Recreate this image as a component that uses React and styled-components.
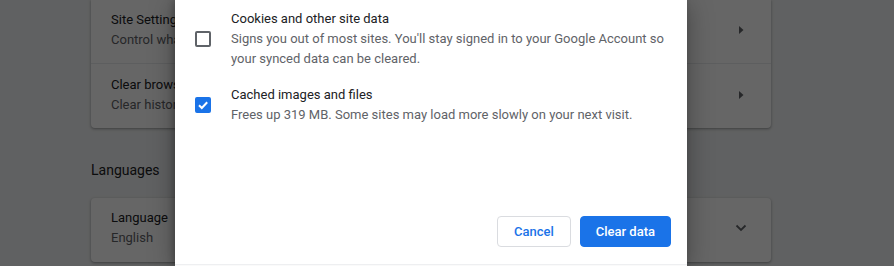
import React from "react";
import styled, { createGlobalStyle } from "styled-components";

const Global = createGlobalStyle`
  html, body { margin: 0; padding: 0; }
  body {
    width: 894px;
    height: 266px;
    overflow: hidden;
    background: #f1f3f4;
    font-family: Roboto, "Liberation Sans", Arial, sans-serif;
    font-size: 13px;
    -webkit-font-smoothing: antialiased;
  }
`;

const Page = styled.div`
  position: relative;
  width: 894px;
  height: 266px;
  box-sizing: border-box;
  padding-right: 32px;
  overflow: hidden;
  display: flex;
  justify-content: center;
`;

const Column = styled.main`
  width: 680px;
  display: flex;
  flex-direction: column;
`;

const Card = styled.section`
  background: #fff;
  border-radius: 4px;
  box-shadow: 0 1px 2px rgba(60, 64, 67, 0.3), 0 1px 3px 1px rgba(60, 64, 67, 0.15);
  border-top-left-radius: ${(p) => (p.$cut ? 0 : 4)}px;
  border-top-right-radius: ${(p) => (p.$cut ? 0 : 4)}px;
`;

const Row = styled.div`
  display: flex;
  align-items: center;
  padding: ${(p) => p.$pad || "12px 0 12px 20px"};
  border-top: ${(p) => (p.$sep ? "1px solid #e8eaed" : "none")};
`;

const RowText = styled.div`
  flex: 1;
  display: flex;
  flex-direction: column;
`;

const Title = styled.div`
  color: #202124;
  font-size: 13px;
  line-height: 20px;
`;

const Secondary = styled.div`
  color: #5f6368;
  font-size: 13px;
  line-height: 20px;
`;

const IconSlot = styled.div`
  width: 20px;
  height: 20px;
  margin-right: 20px;
  display: flex;
  align-items: center;
  justify-content: center;
  color: #5f6368;
`;

const Heading = styled.h2`
  margin: 32px 0 18px;
  font-weight: 400;
  font-size: 14px;
  line-height: 20px;
  color: #202124;
`;

const Backdrop = styled.div`
  position: absolute;
  inset: 0;
  box-sizing: border-box;
  padding-right: 32px;
  background: rgba(0, 0, 0, 0.6);
  display: flex;
  justify-content: center;
`;

const Dialog = styled.div`
  width: 512px;
  height: 100%;
  background: #fff;
  box-shadow: 0 4px 24px rgba(0, 0, 0, 0.35), -2px 0 6px rgba(0, 0, 0, 0.2);
  display: flex;
  flex-direction: column;
`;

const DialogBody = styled.div`
  height: 264px;
  box-sizing: border-box;
  padding: 9px 16px 17px 20px;
  display: flex;
  flex-direction: column;
`;

const Options = styled.div`
  display: flex;
  flex-direction: column;
  gap: 16px;
  flex: 1;
`;

const Option = styled.label`
  display: flex;
  align-items: center;
  gap: 20px;
`;

const Box = styled.span`
  flex: none;
  width: 16px;
  height: 16px;
  box-sizing: border-box;
  border-radius: 2px;
  border: 2px solid ${(p) => (p.$checked ? "#1a73e8" : "#5f6368")};
  background: ${(p) => (p.$checked ? "#1a73e8" : "transparent")};
  display: flex;
  align-items: center;
  justify-content: center;
`;

const OptionText = styled.div`
  display: flex;
  flex-direction: column;
  white-space: nowrap;
`;

const Buttons = styled.div`
  display: flex;
  justify-content: flex-end;
  gap: 9px;
`;

const Button = styled.button`
  height: 31px;
  box-sizing: border-box;
  padding: 0 ${(p) => (p.$primary ? 15 : 16)}px;
  border-radius: 4px;
  font-family: Roboto, "Liberation Sans", Arial, sans-serif;
  font-size: 13px;
  font-weight: 500;
  cursor: pointer;
  border: 1px solid ${(p) => (p.$primary ? "#1a73e8" : "#dadce0")};
  background: ${(p) => (p.$primary ? "#1a73e8" : "#fff")};
  color: ${(p) => (p.$primary ? "#fff" : "#1a73e8")};
`;

const Footer = styled.div`
  flex: 1;
  border-top: 1px solid #eeeff1;
  background: #fafafa;
`;

const ArrowRight = () => (
  <svg width="6" height="10" viewBox="0 0 6 10" aria-hidden="true">
    <path d="M1 1 L5.5 5 L1 9 Z" fill="currentColor" />
  </svg>
);

const Chevron = () => (
  <svg width="12" height="8" viewBox="0 0 12 8" aria-hidden="true">
    <path d="M1.5 1.5 L6 6 L10.5 1.5" fill="none" stroke="currentColor" strokeWidth="1.8" />
  </svg>
);

const Check = () => (
  <svg width="12" height="12" viewBox="0 0 12 12" aria-hidden="true">
    <path d="M2 6.2 L4.8 9 L10.2 3.2" fill="none" stroke="#fff" strokeWidth="2" />
  </svg>
);

export default function App() {
  return (
    <>
      <Global />
      <Page>
        <Column>
          <Card $cut>
            <Row $pad="10px 0 13px 20px">
              <RowText>
                <Title>Site Settings</Title>
                <Secondary>Control what information websites can use and what they can show you</Secondary>
              </RowText>
              <IconSlot><ArrowRight /></IconSlot>
            </Row>
            <Row $sep $pad="11px 0 13px 20px">
              <RowText>
                <Title>Clear browsing data</Title>
                <Secondary>Clear history, cookies, cache, and more</Secondary>
              </RowText>
              <IconSlot><ArrowRight /></IconSlot>
            </Row>
          </Card>
          <Heading>Languages</Heading>
          <Card>
            <Row $pad="10px 0 14px 20px">
              <RowText>
                <Title>Language</Title>
                <Secondary>English</Secondary>
              </RowText>
              <IconSlot><Chevron /></IconSlot>
            </Row>
          </Card>
        </Column>
        <Backdrop>
          <Dialog role="dialog">
            <DialogBody>
              <Options>
                <Option>
                  <Box />
                  <OptionText>
                    <Title>Cookies and other site data</Title>
                    <Secondary>Signs you out of most sites. You'll stay signed in to your Google Account so</Secondary>
                    <Secondary>your synced data can be cleared.</Secondary>
                  </OptionText>
                </Option>
                <Option>
                  <Box $checked><Check /></Box>
                  <OptionText>
                    <Title>Cached images and files</Title>
                    <Secondary>Frees up 319 MB. Some sites may load more slowly on your next visit.</Secondary>
                  </OptionText>
                </Option>
              </Options>
              <Buttons>
                <Button>Cancel</Button>
                <Button $primary>Clear data</Button>
              </Buttons>
            </DialogBody>
            <Footer />
          </Dialog>
        </Backdrop>
      </Page>
    </>
  );
}
